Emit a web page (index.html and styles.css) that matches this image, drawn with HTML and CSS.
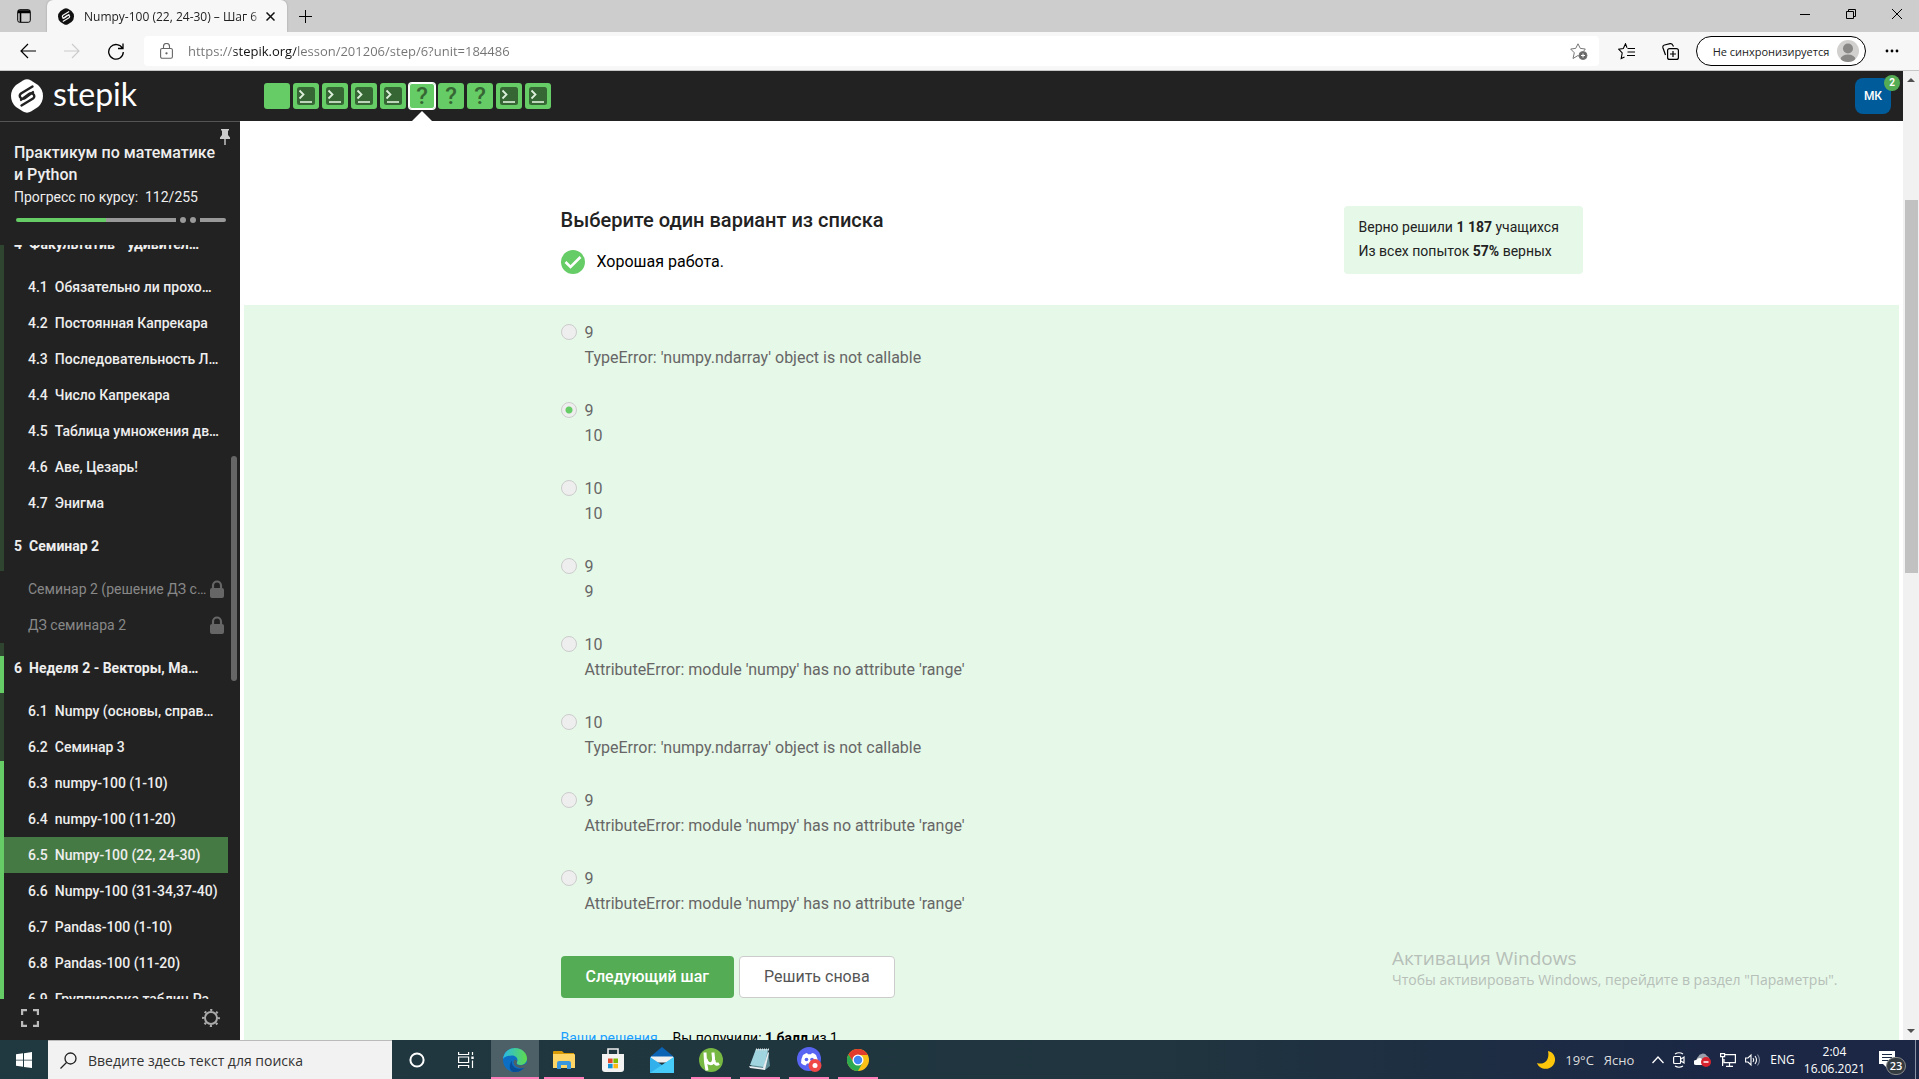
FILE: index.html
```html
<!DOCTYPE html>
<html lang="ru">
<head>
<meta charset="utf-8">
<title>Numpy-100 (22, 24-30) – Шаг 6 – Stepik</title>
<link rel="stylesheet" href="styles.css">
</head>
<body>
<svg width="0" height="0" class="defs" aria-hidden="true">
  <symbol id="logo" viewBox="0 0 32 34">
    <path d="M12 1.500Q16-.800 20 1.500L27 6Q32 10.500 32 17T27 28L20 32.500Q16 34.800 12 32.500L5 28Q0 23.500 0 17T5 6Z" fill="currentColor"/>
    <path d="M21.500 7.500 10 14.500q-2.600 2.300 0 4.700 2 1.400 4-.1l8-6M10.500 26.500l11.500-7q2.600-2.300 0-4.700-2-1.400-4 .1l-8 6" fill="none" stroke="var(--logo-gap)" stroke-width="2.400" stroke-linecap="round"/>
  </symbol>
  <symbol id="terminal" viewBox="0 0 18 18">
    <rect width="18" height="18" rx="2.500" fill="#366634"/>
    <path d="M2.500 3.500 6.500 7.500 2.500 11.500" fill="none" stroke="#dcefdb" stroke-width="1.800"/>
    <path d="M3 15h12" stroke="#dcefdb" stroke-width="1.600"/>
  </symbol>
  <symbol id="lock" viewBox="0 0 14 18">
    <path d="M3 9V5.500a4 4 0 0 1 8 0V9" fill="none" stroke="#666" stroke-width="2.200"/>
    <rect y="8" width="14" height="10" rx="2" fill="#666"/>
  </symbol>
</svg>

<header class="tabs">
  <button class="tabs-menu" aria-label="Меню вкладок">
    <svg width="14" height="14" viewBox="0 0 14 14" fill="none" stroke="#000"><rect x=".7" y=".7" width="12.600" height="12.600" rx="2"/><path d="M1 2h12M1 3.500h12M3.500 4v9" stroke-width="1.600"/></svg>
  </button>
  <div class="tab">
    <svg class="tab-icon" width="16" height="17"><use href="#logo"/></svg>
    <span class="tab-title">Numpy-100 (22, 24-30) – Шаг 6 –</span>
    <button class="tab-close" aria-label="Закрыть вкладку"><svg width="9" height="9" viewBox="0 0 9 9" stroke="#111" stroke-width="1.500"><path d="m.5.5 8 8m0-8-8 8"/></svg></button>
  </div>
  <button class="tab-new" aria-label="Новая вкладка"><svg width="15" height="15" viewBox="0 0 15 15" stroke="#000"><path d="M7.500 1v13M1 7.500h13"/></svg></button>
  <div class="window-controls">
    <button aria-label="Свернуть"><svg width="10" height="10"><path d="M0 5.500h10" stroke="#000"/></svg></button>
    <button aria-label="Восстановить"><svg width="10" height="10" fill="none" stroke="#000"><path d="M.5 2.500h7v7h-7zM2.500 2.500v-2h7v7h-2"/></svg></button>
    <button aria-label="Закрыть"><svg width="10" height="10"><path d="m0 0 10 10m0-10L0 10" stroke="#000"/></svg></button>
  </div>
</header>

<nav class="toolbar">
  <button class="tool" aria-label="Назад"><svg width="16" height="16" fill="none" stroke="#000" stroke-width="1.200"><path d="M16 8H1m7-7L1 8l7 7"/></svg></button>
  <button class="tool" aria-label="Вперёд"><svg width="16" height="16" fill="none" stroke="#ccc" stroke-width="1.200"><path d="M0 8h15M8 1l7 7-7 7"/></svg></button>
  <button class="tool" aria-label="Обновить"><svg width="16" height="17" fill="none" stroke="#000" stroke-width="1.300"><path d="M14.500 5.500A7.300 7.300 0 1 0 15.300 9M15 .5v5h-5"/></svg></button>
  <div class="address">
    <svg width="13" height="16" fill="none" stroke="#666" stroke-width="1.100"><rect x=".6" y="5.500" width="11.800" height="9.800" rx="1.500"/><path d="M3.500 5.500V3.500a3 3 0 0 1 6 0v2"/><circle cx="6.500" cy="10.300" r=".6" fill="#666"/></svg>
    <input class="url" type="text" aria-label="Адрес" value="https://stepik.org/lesson/201206/step/6?unit=184486">
    <svg width="18" height="17" fill="none" stroke="#777"><path d="M11 15 8 12.500 3 15.500 4.300 9.800.7 6l5-.6L8 .8l2.300 4.600 5 .6-1.500 2"/><circle cx="13" cy="12.500" r="4" fill="#666"/><path d="M13 10.500v4m-2-2h4" stroke="#fff"/></svg>
  </div>
  <button class="tool" aria-label="Избранное"><svg width="17" height="17" fill="none" stroke="#000" stroke-width="1.100"><path d="M9 4.800 7.500.8 5.300 5.500.7 6.200l3.500 3.700-1 5.600L6.500 14M9.500 5.500H17M9.500 9H17M9 12.500h8"/></svg></button>
  <button class="tool" aria-label="Коллекции"><svg width="17" height="17" fill="none" stroke="#000" stroke-width="1.200"><rect x="5.600" y="5.600" width="10.800" height="10.800" rx="2"/><path d="M11 8v6m-3-3h6M3.500 12 1 5q-.6-2.500 1.500-3L8 .7q2-.3 2.700 1.300L11.500 3.500"/></svg></button>
  <button class="profile">Не синхронизируется
    <svg width="22" height="22"><defs><clipPath id="av"><circle cx="11" cy="11" r="11"/></clipPath></defs><g clip-path="url(#av)"><rect width="22" height="22" fill="#d2d0ce"/><circle cx="11" cy="8.500" r="5" fill="#8a8886"/><ellipse cx="11" cy="19.500" rx="7.500" ry="5" fill="#8a8886"/></g></svg>
  </button>
  <button class="tool" aria-label="Параметры"><svg width="14" height="4"><circle cx="2" cy="2" r="1.400"/><circle cx="7" cy="2" r="1.400"/><circle cx="12" cy="2" r="1.400"/></svg></button>
</nav>

<div class="viewport">
  <div class="site">
    <header class="site-header">
      <a class="brand" href="#"><svg width="32" height="34"><use href="#logo"/></svg><span>stepik</span></a>
      <nav class="steps" aria-label="Шаги урока">
        <a class="step" href="#" aria-label="Шаг 1"></a>
        <a class="step" href="#" aria-label="Шаг 2"><svg width="18" height="18"><use href="#terminal"/></svg></a>
        <a class="step" href="#" aria-label="Шаг 3"><svg width="18" height="18"><use href="#terminal"/></svg></a>
        <a class="step" href="#" aria-label="Шаг 4"><svg width="18" height="18"><use href="#terminal"/></svg></a>
        <a class="step" href="#" aria-label="Шаг 5"><svg width="18" height="18"><use href="#terminal"/></svg></a>
        <a class="step step-active" href="#">?</a>
        <a class="step" href="#">?</a>
        <a class="step" href="#">?</a>
        <a class="step" href="#" aria-label="Шаг 9"><svg width="18" height="18"><use href="#terminal"/></svg></a>
        <a class="step" href="#" aria-label="Шаг 10"><svg width="18" height="18"><use href="#terminal"/></svg></a>
      </nav>
      <a class="user" href="#">МК<span class="user-badge">2</span></a>
    </header>

    <div class="site-body">
      <aside class="sidebar">
        <div class="course">
          <button class="pin" aria-label="Закрепить"><svg width="10" height="16" viewBox="0 0 10 16" fill="#ccc"><path d="M1 0h8v1.500H8V6l2 2.500V10H0V8.500L2 6V1.500H1zM4.300 10h1.400v6H4.300z"/></svg></button>
          <a class="course-title" href="#">Практикум по математике и Python</a>
          <p class="course-progress">Прогресс по курсу: &nbsp;112/255</p>
          <div class="meter"><span class="meter-main"></span><span class="meter-dot"></span><span class="meter-dot"></span><span class="meter-tail"></span></div>
        </div>
        <nav class="toc">
          <div class="toc-scroll">
            <section class="unit unit-dim">
              <h3><span>4</span>Факультатив - удивител…</h3>
              <a href="#"><span>4.1</span>Обязательно ли прохо…</a>
              <a href="#"><span>4.2</span>Постоянная Капрекара</a>
              <a href="#"><span>4.3</span>Последовательность Л…</a>
              <a href="#"><span>4.4</span>Число Капрекара</a>
              <a href="#"><span>4.5</span>Таблица умножения дв…</a>
              <a href="#"><span>4.6</span>Аве, Цезарь!</a>
              <a href="#"><span>4.7</span>Энигма</a>
            </section>
            <section class="unit unit-locked">
              <h3><span>5</span>Семинар 2</h3>
              <a class="locked" href="#">Семинар 2 (решение ДЗ с…<svg width="14" height="18"><use href="#lock"/></svg></a>
              <a class="locked" href="#">ДЗ семинара 2<svg width="14" height="18"><use href="#lock"/></svg></a>
            </section>
            <section class="unit unit-current">
              <h3><span>6</span>Неделя 2 - Векторы, Ма…</h3>
              <a href="#"><span>6.1</span>Numpy (основы, справ…</a>
              <a href="#"><span>6.2</span>Семинар 3</a>
              <a href="#"><span>6.3</span>numpy-100 (1-10)</a>
              <a href="#"><span>6.4</span>numpy-100 (11-20)</a>
              <a class="current" href="#"><span>6.5</span>Numpy-100 (22, 24-30)</a>
              <a href="#"><span>6.6</span>Numpy-100 (31-34,37-40)</a>
              <a href="#"><span>6.7</span>Pandas-100 (1-10)</a>
              <a href="#"><span>6.8</span>Pandas-100 (11-20)</a>
              <a href="#"><span>6.9</span>Группировка таблиц Pa…</a>
            </section>
          </div>
          <div class="toc-track"><div class="toc-thumb"></div></div>
        </nav>
        <footer class="side-tools">
          <button aria-label="На весь экран"><svg width="18" height="18" fill="none" stroke="#bbb" stroke-width="2.200"><path d="M1.100 6V1.100H6M12 1.100h4.900V6M16.900 12v4.900H12M6 16.900H1.100V12"/></svg></button>
          <button aria-label="Настройки"><svg width="18" height="18" viewBox="0 0 18 18" fill="none" stroke="#aaa"><circle cx="9" cy="9" r="6" stroke-width="2"/><circle cx="9" cy="9" r="8" stroke-width="2" stroke-dasharray="2.200 4.083" stroke-dashoffset="1.100"/></svg></button>
        </footer>
      </aside>

      <main class="lesson">
        <div class="column intro">
          <div>
            <h1>Выберите один вариант из списка</h1>
            <p class="verdict"><svg width="24" height="24"><circle cx="12" cy="12" r="12" fill="#6c6"/><path d="m4.500 12 5 5L19.500 7" fill="none" stroke="#fff" stroke-width="2.600"/></svg>Хорошая работа.</p>
          </div>
          <div class="stats">
            <p>Верно решили <b>1 187</b> учащихся</p>
            <p>Из всех попыток <b>57%</b> верных</p>
          </div>
        </div>
        <form class="quiz">
          <div class="column">
            <label class="option"><input type="radio" name="answer"><span>9<br>TypeError: 'numpy.ndarray' object is not callable</span></label>
            <label class="option"><input type="radio" name="answer" checked><span>9<br>10</span></label>
            <label class="option"><input type="radio" name="answer"><span>10<br>10</span></label>
            <label class="option"><input type="radio" name="answer"><span>9<br>9</span></label>
            <label class="option"><input type="radio" name="answer"><span>10<br>AttributeError: module 'numpy' has no attribute 'range'</span></label>
            <label class="option"><input type="radio" name="answer"><span>10<br>TypeError: 'numpy.ndarray' object is not callable</span></label>
            <label class="option"><input type="radio" name="answer"><span>9<br>AttributeError: module 'numpy' has no attribute 'range'</span></label>
            <label class="option"><input type="radio" name="answer"><span>9<br>AttributeError: module 'numpy' has no attribute 'range'</span></label>
            <div class="actions">
              <button class="btn btn-next" type="button">Следующий шаг</button>
              <button class="btn btn-retry" type="button">Решить снова</button>
            </div>
            <p class="score"><a href="#">Ваши решения</a><span>Вы получили: <b>1 балл</b> из 1</span></p>
          </div>
        </form>
      </main>
    </div>
  </div>
  <div class="scrollbar">
    <svg width="8" height="4"><path d="M0 4 4 0l4 4z" fill="#505050"/></svg>
    <div class="scroll-track"><div class="scroll-thumb"></div></div>
    <svg width="8" height="4"><path d="m0 0 4 4 4-4z" fill="#505050"/></svg>
  </div>
  <div class="watermark"><strong>Активация Windows</strong><p>Чтобы активировать Windows, перейдите в раздел "Параметры".</p></div>
</div>

<footer class="taskbar">
  <button class="start" aria-label="Пуск"><svg width="16" height="16" fill="#fff"><path d="M0 2.300 7 1.300v6.400H0zM8 1.200 16 0v7.700H8zM0 8.500h7v6.300l-7-1zM8 8.500h8V16l-8-1.100z"/></svg></button>
  <label class="search"><svg width="17" height="17" fill="none" stroke="#222" stroke-width="1.300"><circle cx="10.500" cy="6.500" r="5.500"/><path d="M6.500 10.500.5 16.500"/></svg><input type="text" placeholder="Введите здесь текст для поиска" aria-label="Поиск"></label>
  <div class="apps">
    <button class="app" aria-label="Кортана"><svg width="16" height="16"><circle cx="8" cy="8" r="6.600" fill="none" stroke="#fff" stroke-width="2"/></svg></button>
    <button class="app" aria-label="Представление задач"><svg width="16" height="16" fill="none" stroke="#fff" stroke-width="1.200"><path d="M.6 0v2.500h10V0M.6 16v-2.500h10V16M.6 5h10v5.500H.6zM14.500 0v3M14.500 8.500V16"/><path d="M13.300 4.500h2.400V7h-2.400z" fill="#fff" stroke="none"/></svg></button>
    <button class="app app-open app-active" aria-label="Edge"><svg width="24" height="24"><defs><linearGradient id="eg" x1="0" x2="1"><stop stop-color="#28b9e8"/><stop offset="1" stop-color="#5fdb4b"/></linearGradient></defs><circle cx="12" cy="12" r="12" fill="#0c6fc4"/><path d="M0 11C1 3.500 6.500 0 12 0c7.500 0 12 5.500 12 10.500 0 4-3 6.500-6.500 6.500-3 0-4.500-1.300-3.500-3 1.500-2.500-.5-6.500-5-6.500C5 7.500 1 9 0 11z" fill="url(#eg)"/><path d="M9 12.500c-1 5 3 9 9.500 8 1.500-.4 3-1.200 3.600-2A12 12 0 0 1 12 24c-5.500 0-7-6-3-11.500z" fill="#0a4d97"/><path d="M12 11.500c2 .5 2.500 1.500 1.700 3-.8 2 1.500 3 4.300 2.800 2.500-.2 4-1 5.500-2.300l.5 2-1.500 2.500C17 21.500 10.500 19 10.500 14q0-2 1.500-2.500z" fill="#4d6067"/></svg></button>
    <button class="app app-open" aria-label="Проводник"><svg width="22" height="18"><path d="M0 1q0-1 1-1h8l2 2h10v3H0z" fill="#d99a07"/><path d="M0 3h21q1 0 1 1v13H0z" fill="#ffd665"/><path d="M4 18v-6q0-2 2-2h10q2 0 2 2v6h-4v-4H8v4z" fill="#3a96dd"/></svg></button>
    <button class="app" aria-label="Магазин"><svg width="22" height="24"><path d="M6 7V1h10v6" fill="none" stroke="#eee" stroke-width="1.600"/><path d="M0 6h22v15q0 3-3 3H3q-3 0-3-3z" fill="#f3f3f3"/><path d="M6 10.500h4.600V15H6z" fill="#e5492b"/><path d="M11.400 10.500H16V15h-4.600z" fill="#7fba00"/><path d="M6 15.800h4.600v4.500H6z" fill="#1593d8"/><path d="M11.400 15.800H16v4.500h-4.600z" fill="#fdb913"/></svg></button>
    <button class="app" aria-label="Почта"><svg width="24" height="26"><path d="M0 10 12 0l12 10v3H0z" fill="#0b63b5"/><path d="M1 9.500h22v6H1z" fill="#f0f0f0"/><path d="M0 10l12 8 12-8v16H0z" fill="#32b0ec"/><path d="M0 26 24 10v16z" fill="#50d9ff" opacity=".7"/></svg></button>
    <button class="app app-open" aria-label="uTorrent"><svg width="24" height="24"><circle cx="12" cy="12" r="12" fill="#77b843"/><path d="M6 4.500c0 5 .5 12 2 18M7 11c1.500 6 7 6 7.500 1 .2-3-.5-5-.5-7.500M15 12c0 4 2.500 5 5 3.500" fill="none" stroke="#fff" stroke-width="3"/></svg></button>
    <button class="app app-open" aria-label="Блокнот"><svg width="24" height="24"><path d="m8 1 12 1 2 16-5 4-14-3z" fill="#5c8a94"/><path d="M8 1h12l-4 18-14-2z" fill="#a0d4de"/><path d="m1 18 14 2 5-16 1 1-4 17-15-2z" fill="#e9edf0"/><path d="M8 1.500h13" stroke="#ddd" stroke-width="2" stroke-dasharray="1 1"/></svg></button>
    <button class="app app-open" aria-label="Discord"><svg width="25" height="25"><circle cx="12" cy="12" r="12" fill="#5865f2"/><path d="M6 8q3-2 4-2l1 1.300h3L15 6q2 .2 4 2 2 4 2 8-2 2-4.500 2.500L15 16.500h-5L8.500 18.500Q6 18 4 16q0-4 2-8z" fill="#fff"/><circle cx="9.500" cy="12.500" r="1.800" fill="#5865f2"/><circle cx="15" cy="12.500" r="1.800" fill="#5865f2"/><circle cx="18" cy="18.500" r="6.500" fill="#f04747"/><circle cx="18" cy="18.500" r="2.500" fill="#fff"/></svg></button>
    <button class="app app-open" aria-label="Chrome"><svg width="22" height="22" viewBox="0 0 24 24"><circle cx="12" cy="12" r="12" fill="#fbc116"/><path d="M1.600 6A12 12 0 0 1 22.400 6L22.400 6.500H12L7.500 15z" fill="#e33b2e"/><path d="M1.600 6A12 12 0 0 0 12 24l5-9-9.500 0z" fill="#2da94f"/><circle cx="12" cy="12" r="6" fill="#fff"/><circle cx="12" cy="12" r="4.600" fill="#4285f4"/></svg></button>
  </div>
  <div class="tray">
    <span class="weather"><svg width="18" height="18"><path d="M11 0C20 2 20.500 14 12 17.300 7 19 1.500 16.500 0 12c7 2.500 13-3 11-12z" fill="#fdc60b"/></svg><span>19°C</span><span>Ясно</span></span>
    <svg width="12" height="8" fill="none" stroke="#fff" stroke-width="1.300"><path d="m.5 7 5.500-6 5.500 6"/></svg>
    <svg width="12" height="16" fill="none" stroke="#fff" stroke-width="1.200"><rect x=".6" y="4.500" width="7" height="7" rx="1"/><path d="m8 7 3-2v6L8 9M2 2q4-2.500 8 0M2 14q4 2.500 8 0"/></svg>
    <svg width="17" height="15"><path d="M4 10a3 3 0 0 1 0-5 5 5 0 0 1 9-1q3 1 2 6z" fill="#9aa0aa"/><path d="M2 13a2.500 2.500 0 0 1 0-5q4-4 7 0v5z" fill="#fff"/><circle cx="12" cy="10" r="5" fill="#d8232e"/><path d="M9.500 10h5" stroke="#fff" stroke-width="1.500"/></svg>
    <svg width="16" height="14" fill="none" stroke="#fff" stroke-width="1.200"><path d="M5 1.600h10.400v8H4V6M9.500 10v3M6 13.300h7M.6.600h4v3h-4zM2.600 4v9"/></svg>
    <svg width="16" height="14" fill="none" stroke="#fff" stroke-width="1.100"><path d="M.6 5v4H3l3 3V2L3 5zM8 5q1.500 2 0 4M10 3q3 4 0 8"/><path d="M12.500 1.500q4 5.500 0 11" stroke="#8790a3"/></svg>
    <span>ENG</span>
    <time class="clock">2:04<br>16.06.2021</time>
    <button class="notices" aria-label="Уведомления"><svg width="16" height="17"><path d="M0 0h16v13H8v4l-4-4H0z" fill="#fff"/><path d="M3 3.500h10M3 6.500h10M3 9.500h7" stroke="#1b2a44" stroke-width="1.200"/></svg><span>23</span></button>
  </div>
</footer>
</body>
</html>
```
FILE: styles.css
```css
* { box-sizing: border-box; }

body {
  --ui: "Open Sans", "Noto Sans", sans-serif;
  margin: 0;
  height: 100vh;
  display: flex;
  flex-direction: column;
  overflow: hidden;
  font-family: Roboto, "Noto Sans", sans-serif;
  font-size: 14px;
  color: #222;
  background: #fff;
}
h1, h3, p { margin: 0; }
a { color: inherit; text-decoration: none; }
button { border: 0; padding: 0; background: none; font: inherit; color: inherit; display: flex; align-items: center; justify-content: center; }
svg { display: block; flex: none; }
.defs { position: absolute; }

/* Browser chrome */
.tabs { flex: none; height: 32px; display: flex; background: #cdcdcd; font-family: var(--ui); }
.tabs-menu { width: 47px; }
.tab { width: 240px; padding: 0 12px 0 11px; display: flex; align-items: center; gap: 10px; background: #f7f7f7; border-radius: 6px 6px 0 0; box-shadow: 0 0 2px #999; }
.tab-icon { --logo-gap: #f7f7f7; color: #111; }
.tab-title { flex: 1; min-width: 0; margin-right: -6px; font-size: 12px; white-space: nowrap; overflow: hidden; -webkit-mask-image: linear-gradient(90deg, #000 94%, transparent); mask-image: linear-gradient(90deg, #000 94%, transparent); }
.tab-new { width: 36px; }
.window-controls { margin-left: auto; display: flex; }
.window-controls button { width: 46px; height: 28px; }
.window-controls button:last-child { width: 45px; }

.toolbar { flex: none; height: 39px; padding: 4px 5px 4px 6px; display: flex; align-items: center; background: #f7f7f7; border-bottom: 1px solid #c4c7c6; font-family: var(--ui); }
.tool { width: 44px; height: 30px; }
.tool:nth-of-type(3) { margin-right: 6px; }
.address { flex: 1; height: 30px; padding: 0 11px 0 16px; display: flex; align-items: center; gap: 15px; background: #fff; border-radius: 4px; margin-right: 5px; }
.url { flex: 1; border: 0; padding: 0; outline: 0; font: 13px var(--ui); color: #737373; -webkit-text-fill-color: transparent; background: linear-gradient(90deg, #737373 46px, #111 46px, #111 108px, #737373 108px) text; -webkit-background-clip: text; }
.profile { width: 170px; height: 30px; margin: 0 4px; padding-left: 10px; gap: 8px; border: 1px solid #000; border-radius: 15px; background: #fff; font-size: 11px; }

.viewport { flex: 1; min-height: 0; position: relative; display: flex; }
.site { flex: 1; min-width: 0; display: flex; flex-direction: column; }

.scrollbar { width: 16px; padding: 7px 0; display: flex; flex-direction: column; align-items: center; background: #f1f1f1; }
.scroll-track { flex: 1; width: 13px; padding-top: 118px; }
.scroll-thumb { height: 45%; background: #c1c1c1; }

/* Site header */
.site-header { flex: none; height: 50px; padding: 0 12px 0 11px; display: flex; align-items: center; background: #222; color: #fff; }
.brand { --logo-gap: #222; width: 253px; display: flex; align-items: center; gap: 10px; font: 32px/34px Lato, sans-serif; }
.brand span { padding-bottom: 4px; }
.steps { display: flex; gap: 3px; }
.step { position: relative; width: 26px; height: 26px; display: flex; align-items: center; justify-content: center; border-radius: 3px; background: #6c6; color: #366634; font-size: 24px; font-weight: 500; line-height: 26px; }
.step-active { box-shadow: 0 0 0 1px #fff, inset 0 0 0 1px #fff; }
.step-active::after { content: ""; position: absolute; top: 28px; left: 3px; border: 10px solid transparent; border-top: 0; border-bottom-color: #fff; }
.user { position: relative; width: 36px; height: 36px; margin-left: auto; display: flex; align-items: center; justify-content: center; border-radius: 8px; background: #005b9a; font-size: 12px; font-weight: 500; }
.user-badge { position: absolute; top: -3px; right: -9px; width: 16px; height: 16px; border-radius: 50%; background: #54ad54; font-size: 10px; font-weight: 700; line-height: 16px; text-align: center; }

.site-body { flex: 1; min-height: 0; display: flex; }

/* Sidebar */
.sidebar { flex: none; width: 240px; display: flex; flex-direction: column; background: #222; color: #eee; border-top: 1px solid #555; }
.course { flex: none; position: relative; height: 123px; padding: 20px 14px 0; }
.pin { position: absolute; top: 7px; right: 10px; }
.course-title { display: block; padding-right: 6px; font-size: 16px; font-weight: 500; line-height: 22px; }
.course-progress { line-height: 22px; }
.meter { display: flex; align-items: center; gap: 4px; margin: 9px 0 0 2px; }
.meter-main { width: 160px; height: 4px; border-radius: 2px 0 0 2px; background: linear-gradient(90deg, #6c6 90px, #999 90px); }
.meter-dot { width: 6px; height: 6px; border-radius: 50%; background: #999; }
.meter-tail { width: 26px; height: 4px; border-radius: 0 2px 2px 0; background: #999; }

.toc { flex: 1; min-height: 0; display: flex; overflow: hidden; }
.toc-scroll { width: 228px; margin-top: -26px; font-weight: 500; }
.toc-track { width: 12px; padding: 211px 3px 0; }
.toc-thumb { height: 225px; border-radius: 3px; background: #666; }
.unit { background-repeat: no-repeat; background-size: 4px 100%; }
.unit-dim { background-image: linear-gradient(#2f4530, #2f4530); }
.unit-locked { background-image: linear-gradient(#2f4530 50px, transparent 50px); }
.unit-current { background-image: linear-gradient(#2f4530 13px, #6c6 13px, #6c6 50px, #2f4530 50px, #2f4530 118px, #6c6 118px); }
.unit h3 { height: 50px; padding-left: 14px; display: flex; align-items: center; gap: 7px; font-size: 14px; font-weight: 700; white-space: nowrap; }
.unit a { height: 36px; margin-left: 4px; padding: 0 4px 0 24px; display: flex; align-items: center; gap: 7px; white-space: nowrap; }
.unit .locked { justify-content: space-between; gap: 0; font-weight: 400; color: #888; }
.unit .current { background: #467a45; }

.side-tools { flex: none; height: 41px; padding: 0 20px 4px 21px; display: flex; justify-content: space-between; }

/* Lesson */
.lesson { flex: 1; min-width: 0; padding: 0 4px; display: flex; flex-direction: column; background: #fff; overflow: hidden; }
.column { width: 100%; max-width: 1022px; margin: 0 auto; }
.intro { flex: none; height: 184px; padding-top: 85px; display: flex; align-items: flex-start; justify-content: space-between; }
h1 { font-size: 20px; font-weight: 500; line-height: 28px; }
.verdict { display: flex; align-items: center; gap: 12px; margin-top: 15px; font-size: 16px; line-height: 26px; color: #000; }
.stats { width: 239px; padding: 9px 15px 11px; border-radius: 4px; background: #e6f8e8; line-height: 24px; }
.stats b, .score b { font-weight: 700; }
.quiz { flex: 1 0 auto; padding-top: 15px; background: #e6f8e8; }
.option { display: flex; gap: 8px; margin-bottom: 28px; font-size: 16px; line-height: 25px; color: #666; }
.option input { appearance: none; flex: none; width: 16px; height: 16px; margin: 4px 0 0; border: 1px solid #ccc; border-radius: 50%; background: #eee; }
.option input:checked { background: radial-gradient(circle, #6c6 3px, #eee 4px); }
.actions { display: flex; gap: 5px; margin-top: 40px; }
.btn { height: 42px; padding: 0 25px 2px; border-radius: 4px; font-size: 16px; }
.btn-next { background: #54ad54; color: #fff; font-weight: 500; }
.btn-retry { padding: 0 24px 2px; border: 1px solid #ccc; background: #fff; color: #555; }
.score { display: flex; gap: 15px; margin-top: 30px; line-height: 20px; color: #000; }
.score a { color: #1a9fff; }

.watermark { position: absolute; top: 875px; right: 73px; width: 454px; font-family: var(--ui); color: #b6bfb8; white-space: nowrap; }
.watermark strong { display: block; font-size: 19px; font-weight: 400; line-height: 24px; }
.watermark p { font-size: 14px; line-height: 20px; }

/* Taskbar */
.taskbar { flex: none; height: 39px; display: flex; background: linear-gradient(90deg, #20383f 0%, #20353f 60%, #1b2745 90%); color: #fff; font-family: var(--ui); }
.start { width: 48px; }
.search { width: 344px; padding: 0 12px; display: flex; align-items: center; gap: 11px; background: #f2f2f2; border-top: 1px solid #bbb; }
.search input { flex: 1; border: 0; padding: 0; background: none; font: 14px var(--ui); outline: 0; }
.search input::placeholder { color: #333; }
.apps { display: flex; gap: 1px; padding-left: 1px; }
.app { position: relative; width: 48px; }
.app-active { background: #4d6067; }
.app-open::after { content: ""; position: absolute; left: 4px; right: 4px; bottom: 0; height: 2px; background: #ff7eb9; }
.app-active::after { left: 0; right: 0; }
.tray { margin-left: auto; display: flex; align-items: center; gap: 9px; padding-right: 3px; font-size: 12px; }
.weather { display: flex; align-items: center; gap: 10px; margin-right: 9px; font-size: 13px; color: #ddd; }
.clock { margin: 0 4px 0 0; text-align: center; line-height: 17px; }
.notices { position: relative; width: 38px; height: 39px; padding-right: 20px; border-right: 1px solid #8a92a5; }
.notices span { position: absolute; left: 8px; top: 17px; width: 20px; height: 18px; border: 1px solid #888; border-radius: 9px; background: #333a40; font-size: 11px; font-weight: 600; line-height: 16px; }
```
